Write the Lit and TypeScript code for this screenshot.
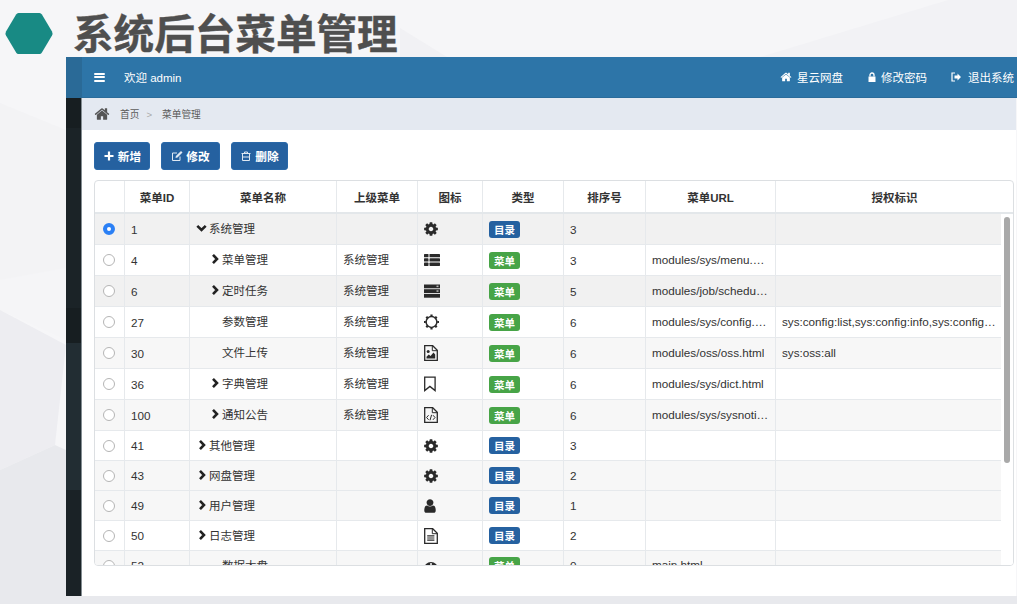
import { LitElement, html, css, svg } from "lit";
import { customElement } from "lit/decorators.js";

const COG = "M1152 896q0-106-75-181t-181-75-181 75-75 181 75 181 181 75 181-75 75-181zm512-109v222q0 12-8 23t-20 13l-185 28q-19 54-39 91 35 50 107 138 10 12 10 25t-9 23q-27 37-99 108t-94 71q-12 0-26-9l-138-108q-44 23-91 38-16 136-29 186-7 28-36 28h-222q-14 0-24.5-8.5t-11.5-21.5l-28-184q-49-16-90-37l-141 107q-10 9-25 9-14 0-25-11-126-114-165-168-7-10-7-23 0-12 8-23 15-21 51-66.5t54-70.5q-27-50-41-99l-183-27q-13-2-21-12.5t-8-23.5v-222q0-12 8-23t19-13l186-28q14-46 39-92-40-57-107-138-10-12-10-24 0-10 9-23 26-36 98.5-107.5t94.5-71.5q13 0 26 10l138 107q44-23 91-38 16-136 29-186 7-28 36-28h222q14 0 24.5 8.5t11.5 21.5l28 184q49 16 90 37l142-107q9-9 24-9 13 0 25 10 129 119 165 170 7 8 7 22 0 12-8 23-15 21-51 66.5t-54 70.5q26 50 41 98l183 28q13 2 21 12.5t8 23.5z";
const HOME = "M1472 992v480q0 26-19 45t-45 19h-384v-384h-256v384h-384q-26 0-45-19t-19-45v-480q0-1 .5-3t.5-3l575-474 575 474q1 2 1 6zm223-69l-62 74q-8 9-21 11h-3q-13 0-21-7l-692-577-692 577q-12 8-24 7-13-2-21-11l-62-74q-8-10-7-23.5t11-21.5l719-599q32-26 76-26t76 26l244 204v-195q0-14 9-23t23-9h192q14 0 23 9t9 23v408l219 182q10 8 11 21.5t-7 23.5z";
const USER = "M1536 1399q0 109-62.5 187t-150.5 78h-854q-88 0-150.5-78t-62.5-187q0-85 8.5-160.5t31.5-152 58.5-131 94-89 134.5-34.5q131 128 313 128t313-128q76 0 134.5 34.5t94 89 58.5 131 31.5 152 8.5 160.5zm-256-887q0 159-112.5 271.5t-271.5 112.5-271.5-112.5-112.5-271.5 112.5-271.5 271.5-112.5 271.5 112.5 112.5 271.5z";

const fa = (d: string, cls = "ic") => html`<svg class=${cls} viewBox="0 0 1792 1792"><path fill="currentColor" d=${d}></path></svg>`;
const box = (body: unknown, cls = "ic") => html`<svg class=${cls} viewBox="0 0 16 16">${body}</svg>`;
const DOC = svg`<path d="M.7.7h8l4.600 4.600v10h-12.600z" fill="none" stroke="currentColor" stroke-width="1.300"/><path d="M8.300.7v5h5" fill="none" stroke="currentColor" stroke-width="1"/>`;

const ICONS: Record<string, () => unknown> = {
  cog: () => fa(COG, "ic cg"),
  user: () => fa(USER, "ic us"),
  list: () => box(svg`<g fill="currentColor"><rect x="0" y="2" width="4.500" height="3.300" rx=".6"/><rect x="5.500" y="2" width="10.500" height="3.300" rx=".6"/><rect x="0" y="6.300" width="4.500" height="3.300" rx=".6"/><rect x="5.500" y="6.300" width="10.500" height="3.300" rx=".6"/><rect x="0" y="10.600" width="4.500" height="3.300" rx=".6"/><rect x="5.500" y="10.600" width="10.500" height="3.300" rx=".6"/></g>`),
  server: () => box(svg`<g fill="currentColor"><rect x="0" y="1.500" width="16" height="3.800"/><rect x="0" y="6.200" width="16" height="3.800"/><rect x="0" y="10.900" width="16" height="3.800"/></g><rect x="12.500" y="2.600" width="2" height="1.500" fill="#bbb"/><rect x="12.500" y="7.300" width="2" height="1.500" fill="#bbb"/>`),
  sun: () => box(svg`<circle cx="7.500" cy="8" r="5.400" fill="none" stroke="currentColor" stroke-width="1.500"/><g stroke="currentColor" stroke-width="2.200"><path d="M7.500 .6v1.800M7.500 13.600v1.800M0 8h1.800M13.200 8H15M2.300 2.800l1.300 1.300M11.400 11.900l1.300 1.300M12.700 2.800l-1.300 1.300M3.600 11.900l-1.300 1.300"/></g>`),
  image: () => box(svg`${DOC}<path d="M2.500 13.500v-1.800l2.300-2.300 1.700 1.700 3-3.600 1.700 2.100v3.900z" fill="currentColor"/><circle cx="4.200" cy="6.600" r="1.500" fill="currentColor"/>`),
  bookmark: () => box(svg`<path d="M.7 1.200h10.400v13.400L5.900 10.400.7 14.600z" fill="none" stroke="currentColor" stroke-width="1.300"/>`),
  code: () => box(svg`${DOC}<path d="M4.600 8.200l-2 2.300 2 2.300M9 8.200l2 2.300-2 2.300M7.600 7.800l-1.600 5.500" fill="none" stroke="currentColor" stroke-width="1"/>`),
  file: () => box(svg`${DOC}<path d="M3.200 7.900h7.200M3.200 10h7.200M3.200 12.100h7.200" stroke="currentColor" stroke-width="1.100"/>`),
  dash: () => box(svg`<path d="M0 11a7 7 0 0 1 14 0c0 1.500-.5 2.500-1 3H1c-.5-.5-1-1.500-1-3z" fill="currentColor"/><circle cx="7" cy="6" r="1" fill="#f7f7f7"/><circle cx="3.500" cy="8" r="1" fill="#f7f7f7"/><circle cx="10.500" cy="8" r="1" fill="#f7f7f7"/>`),
};

interface Row { id: string; name: string; level: number; arrow: "" | "r" | "d"; parent: string; icon: string; type: "dir" | "menu"; order: string; url: string; perms: string; h: number; tone: "" | "t1" | "t2"; on?: boolean }

const r = (id: string, name: string, level: number, arrow: Row["arrow"], parent: string, icon: string, type: Row["type"], order: string, url: string, perms: string, h: number, tone: Row["tone"], on = false): Row =>
  ({ id, name, level, arrow, parent, icon, type, order, url, perms, h, tone, on });

const ROWS: Row[] = [
  r("1", "系统管理", 0, "d", "", "cog", "dir", "3", "", "", 31, "t1", true),
  r("4", "菜单管理", 1, "r", "系统管理", "list", "menu", "3", "modules/sys/menu.html", "", 31, ""),
  r("6", "定时任务", 1, "r", "系统管理", "server", "menu", "5", "modules/job/schedule.html", "", 31, "t1"),
  r("27", "参数管理", 1, "", "系统管理", "sun", "menu", "6", "modules/sys/config.html", "sys:config:list,sys:config:info,sys:config:save,sys:config:update", 31, ""),
  r("30", "文件上传", 1, "", "系统管理", "image", "menu", "6", "modules/oss/oss.html", "sys:oss:all", 31, "t2"),
  r("36", "字典管理", 1, "r", "系统管理", "bookmark", "menu", "6", "modules/sys/dict.html", "", 31, ""),
  r("100", "通知公告", 1, "r", "系统管理", "code", "menu", "6", "modules/sys/sysnotice.html", "", 31, "t2"),
  r("41", "其他管理", 0, "r", "", "cog", "dir", "3", "", "", 30, ""),
  r("43", "网盘管理", 0, "r", "", "cog", "dir", "2", "", "", 30, "t2"),
  r("49", "用户管理", 0, "r", "", "user", "dir", "1", "", "", 30, "t2"),
  r("50", "日志管理", 0, "r", "", "file", "dir", "2", "", "", 30, ""),
  r("52", "数据大盘", 1, "", "", "dash", "menu", "0", "main.html", "", 30, "t2"),
];

const HEADS = ["", "菜单ID", "菜单名称", "上级菜单", "图标", "类型", "排序号", "菜单URL", "授权标识"];

@customElement("app-root")
export class AppRoot extends LitElement {
  static styles = css`
    :host { display: block; position: relative; width: 1017px; height: 604px; overflow: hidden; background: #f6f6f8;
      font-family: "Liberation Sans", "Noto Sans CJK SC", sans-serif; color: #333; }
    .bg { position: absolute; inset: 0; width: 1017px; height: 604px; }
    .slide { position: relative; display: flex; flex-direction: column; height: 604px; }
    .title { height: 57px; flex: none; display: flex; align-items: center; padding-left: 5px; gap: 20px; box-sizing: border-box; }
    .hex { width: 48px; height: 43px; margin-top: 10px; flex: none; }
    .title h1 { margin: 14px 0 0; font-size: 40.600px; line-height: 43px; font-weight: 700; color: #4f4f4f; white-space: nowrap; -webkit-text-stroke: .4px #4f4f4f; }
    .frame { margin-left: 66px; height: 539px; flex: none; display: flex; }
    .side { width: 15px; flex: none; display: flex; flex-direction: column; border-right: 1px solid #848d92; }
    .side i { display: block; }
    .s0 { height: 41px; background: #2a6a97; margin-right: -1px; }
    .s1 { height: 30px; background: #171e21; }
    .s2 { height: 180px; background: #1b2327; }
    .s3 { height: 35px; background: #171e21; }
    .s4 { height: 147px; background: #222d33; }
    .s5 { height: 106px; background: #1a2226; }
    .main { flex: 1; min-width: 0; display: flex; flex-direction: column; background: linear-gradient(#fff, #fff) 0 0 / 934px 100% no-repeat; }
    .top { height: 41px; flex: none; box-sizing: border-box; display: flex; align-items: center; background: #2d75a8; color: #fff; border-bottom: 1px solid #2a6c9b; font-size: 11.5px; padding: 0 3px 0 12px; }
    .bars { width: 11px; height: 9px; display: flex; flex-direction: column; justify-content: space-between; margin-right: 19px; }
    .bars b { display: block; height: 2px; background: #fff; border-radius: 1px; }
    .top .right { margin-left: auto; display: flex; align-items: center; gap: 23px; }
    .nav { display: flex; align-items: center; white-space: nowrap; }
    .nav svg { width: 12px; height: 12px; }
    .m5 { margin-right: 5px; } .m3 { margin-right: 3px; } .m6 { margin-right: 6px; }
    .crumb { height: 32px; flex: none; width: 934px; box-sizing: border-box; background: #e4e9f1; display: flex; align-items: center; padding-left: 12px; font-size: 9.700px; color: #5c5c5c; }
    .crumb .hm { width: 16px; height: 16px; color: #555; margin-right: 10px; }
    .crumb em { font-style: normal; color: #aaa; margin: 0 10px 0 7px; }
    .content { flex: 1; width: 934px; box-sizing: border-box; padding: 12px 0 0 12px; }
    .btns { display: flex; gap: 11px; }
    .btn { height: 28px; box-sizing: border-box; display: flex; align-items: center; justify-content: center; gap: 3px; background: #2561a0; border: 1px solid #2a68a8; border-radius: 3px; color: #fff; font-size: 11.700px; font-weight: 700; padding-bottom: 1px; }
    .b1 { width: 56px; } .b2 { width: 59px; } .b3 { width: 57px; }
    .btn svg { width: 12px; height: 12px; }
    .table { position: relative; margin-top: 10px; width: 920px; height: 386px; box-sizing: border-box; border: 1px solid #dcdfe2; border-radius: 4px; overflow: hidden; background: #fff; }
    .cols { display: grid; grid-template-columns: 30px 65px 147px 81px 65px 81px 82px 130px 1fr; }
    .head { height: 33px; border-bottom: 2px solid #e3e7ea; box-sizing: border-box; width: 918px; }
    .head div { display: flex; align-items: center; justify-content: center; font-size: 11.500px; font-weight: 700; color: #333; border-right: 1px solid #e6e9ec; }
    .head div:last-child { border-right: 0; }
    .body { height: 351px; overflow: hidden; width: 906px; border-right: 1px solid #e6e9ec; margin-right: 12px; }
    .row { border-bottom: 1px solid #e6e9ec; box-sizing: border-box; font-size: 11.700px; }
    .row.t1 { background: #f1f1f1; } .row.t2 { background: #f7f7f7; }
    .row > div { display: flex; align-items: center; padding-left: 6px; min-width: 0; border-right: 1px solid #e6e9ec; box-sizing: border-box; white-space: nowrap; overflow: hidden; }
    .row > div:last-child { border-right: 0; }
    .row > .rc { padding-left: 8px; }
    .cjk { font-size: 11.500px; padding-bottom: 2px; }
    .radio { width: 12px; height: 12px; box-sizing: border-box; border: 1px solid #b5b5b5; border-radius: 50%; background: #fff; }
    .radio.on { border: 4px solid #2b80f5; }
    .name { gap: 2px; }
    .l0 { padding-left: 7px !important; } .l1 { padding-left: 20px !important; }
    .l0.dn { padding-left: 6px !important; }
    .arrow { width: 10px; height: 12px; flex: none; color: #222; }
    .dn .arrow { width: 11px; }
    .ic { width: 16px; height: 16px; color: #2a2a2a; flex: none; }
    .cg { margin-left: -1px; } .us { margin-left: -2px; }
    .badge { width: 31px; height: 17px; display: flex; align-items: center; justify-content: center; color: #fff; font-size: 10.500px; font-weight: 700; border-radius: 3px; }
    .dir { background: #2561a0; } .menu { background: #47a447; }
    .t { display: block; overflow: hidden; text-overflow: ellipsis; }
    .urlc { padding-right: 5px; padding-bottom: 2px; }
    .track { position: absolute; right: 0; top: 33px; bottom: 0; width: 12px; background: #fff; }
    .thumb { position: absolute; left: 3px; top: 3px; width: 6px; height: 246px; border-radius: 3px; background: #a9a9a9; }
  `;

  private renderRow(row: Row) {
    const chev = row.arrow === "d"
      ? html`<svg class="arrow" viewBox="0 0 11 12"><path d="M1.300 3.800L5.500 8l4.200-4.200" fill="none" stroke="currentColor" stroke-width="2.600"/></svg>`
      : html`<svg class="arrow" viewBox="0 0 10 12"><path d="M3 1.800L7 6l-4 4.200" fill="none" stroke="currentColor" stroke-width="2.600"/></svg>`;
    return html`<div class="cols row ${row.tone}" style="height:${row.h}px">
      <div class="rc"><span class="radio ${row.on ? "on" : ""}"></span></div>
      <div>${row.id}</div>
      <div class="name cjk l${row.level} ${row.arrow === "d" ? "dn" : ""}">${row.arrow ? chev : html`<span class="arrow"></span>`}<span>${row.name}</span></div>
      <div class="cjk">${row.parent}</div>
      <div>${ICONS[row.icon]()}</div>
      <div><span class="badge ${row.type}">${row.type === "dir" ? "目录" : "菜单"}</span></div>
      <div>${row.order}</div>
      <div class="urlc"><span class="t">${row.url}</span></div>
      <div class="urlc"><span class="t">${row.perms}</span></div>
    </div>`;
  }

  render() {
    return html`
      <svg class="bg" viewBox="0 0 1017 604">
        <polygon points="0,103 66,130 66,268 0,280" fill="#f3f3f5"/>
        <polygon points="0,280 66,268 66,340 0,310" fill="#f5f5f7"/>
        <polygon points="0,310 66,345 55,445 0,470" fill="#ededf1"/>
        <polygon points="0,470 55,445 66,450 66,604 0,604" fill="#e8e9ed"/>
        <polygon points="948,0 1017,0 1017,57 760,57" fill="#f2f2f5"/>
        <polygon points="400,28 447,57 400,57" fill="#f1f1f4"/>
        <rect x="0" y="596" width="1017" height="8" fill="#e8e9ed"/>
      </svg>
      <div class="slide">
        <div class="title">
          <svg class="hex" viewBox="0 0 48 43"><path d="M13.500 1h21q1.500 0 2.400 1.500L47 19.500q1 2 0 4L36.900 40.500q-.9 1.500-2.400 1.500h-21q-1.500 0-2.400-1.500L1 23.500q-1-2 0-4L11.100 2.500q.9-1.500 2.400-1.500z" fill="#188a84"/></svg>
          <h1>系统后台菜单管理</h1>
        </div>
        <div class="frame">
          <div class="side"><i class="s0"></i><i class="s1"></i><i class="s2"></i><i class="s3"></i><i class="s4"></i><i class="s5"></i></div>
          <div class="main">
            <div class="top">
              <span class="bars"><b></b><b></b><b></b></span>
              <span>欢迎 admin</span>
              <div class="right">
                <span class="nav">${fa(HOME, "m5")}星云网盘</span>
                <span class="nav"><svg class="m3" viewBox="0 0 12 12"><path d="M2.500 5.500h7v5.500h-7z" fill="#fff"/><path d="M4 5.500V4a2 2 0 0 1 4 0v1.500" fill="none" stroke="#fff" stroke-width="1.300"/></svg>修改密码</span>
                <span class="nav"><svg class="m6" viewBox="0 0 12 12"><path d="M5 2H2v8h3" fill="none" stroke="#fff" stroke-width="1.200"/><path d="M4.500 4.500h3V2.500L11 6 7.500 9.500v-2h-3z" fill="#fff"/></svg>退出系统</span>
              </div>
            </div>
            <div class="crumb">${fa(HOME, "hm")}<span>首页</span><em>&gt;</em><span>菜单管理</span></div>
            <div class="content">
              <div class="btns">
                <div class="btn b1"><svg viewBox="0 0 12 12"><path d="M6 1.500v9M1.500 6h9" stroke="#fff" stroke-width="2.200"/></svg>新增</div>
                <div class="btn b2"><svg viewBox="0 0 12 12"><path d="M9 6.500V10.500H1.500V3H6" fill="none" stroke="#dfe8f2" stroke-width="1"/><path d="M4.500 8l.4-2L10 1l1.500 1.500-5 5z" fill="#dfe8f2"/></svg>修改</div>
                <div class="btn b3"><svg viewBox="0 0 12 12"><path d="M2.500 3.500h7v7h-7zM1.500 3.500h9M4.500 3.500V2h3v1.500M2.500 7h7" fill="none" stroke="#dfe8f2" stroke-width="1"/></svg>删除</div>
              </div>
              <div class="table">
                <div class="cols head">${HEADS.map((h) => html`<div>${h}</div>`)}</div>
                <div class="body">${ROWS.map((row) => this.renderRow(row))}</div>
                <div class="track"><div class="thumb"></div></div>
              </div>
            </div>
          </div>
        </div>
      </div>`;
  }
}
